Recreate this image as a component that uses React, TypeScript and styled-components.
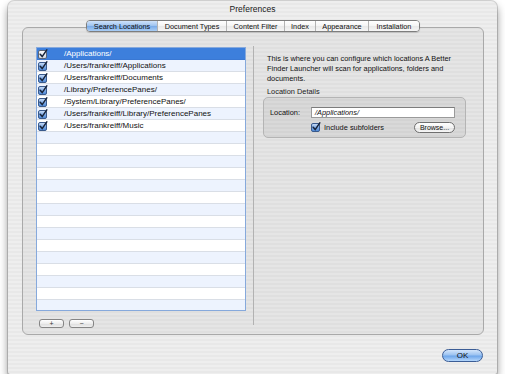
import React, { useId } from 'react';
import styled, { createGlobalStyle, css } from 'styled-components';

const GlobalStyle = createGlobalStyle`
  html, body {
    margin: 0;
    padding: 0;
    background: #ffffff;
  }
  body {
    font-family: "Liberation Sans", Arial, sans-serif;
    color: #111;
  }
`;

const pinstripe = css`
  background-color: #ececec;
  background-image: repeating-linear-gradient(
    180deg,
    #eeeeee 0px,
    #eeeeee 2px,
    #e8e8e8 2px,
    #e8e8e8 4px
  );
`;

const Window = styled.div`
  ${pinstripe}
  width: 489px;
  height: 373px;
  margin: 1px 0 0 8px;
  border-radius: 6px 6px 2px 2px;
  box-shadow: 0 5px 9px rgba(0, 0, 0, 0.45), 0 0 0 1px rgba(0, 0, 0, 0.15);
  display: flex;
  flex-direction: column;
`;

const TitleBar = styled.div`
  height: 15px;
  padding-bottom: 4px;
  display: flex;
  align-items: center;
  justify-content: center;
  font-size: 8.5px;
  color: #1a1a1a;
`;

const TabArea = styled.div`
  display: flex;
  flex-direction: column;
  align-items: center;
  padding: 0 13px 0 14px;
`;

const TabStrip = styled.div`
  position: relative;
  z-index: 1;
  display: flex;
  height: 12px;
  margin-bottom: -5px;
  border: 1px solid #7d7d7d;
  border-radius: 4px;
  overflow: hidden;
  box-sizing: border-box;
  box-shadow: 0 1px 1px rgba(0, 0, 0, 0.15);
`;

const Tab = styled.div<{ $width: number; $active?: boolean }>`
  width: ${({ $width }) => $width}px;
  display: flex;
  align-items: center;
  justify-content: center;
  font-size: 7.3px;
  color: #111;
  box-sizing: border-box;
  border-left: 1px solid #b3b3b3;
  &:first-child {
    border-left: none;
  }
  background: ${({ $active }) =>
    $active
      ? 'linear-gradient(180deg, #cfe2fa 0%, #9cc2ef 50%, #78aae8 51%, #a9cdf5 100%)'
      : 'linear-gradient(180deg, #ffffff 0%, #f4f4f4 50%, #e8e8e8 51%, #f6f6f6 100%)'};
`;

const TabBox = styled.div`
  align-self: stretch;
  height: 308px;
  box-sizing: border-box;
  border: 1px solid #a9a9a9;
  border-radius: 6px;
  background: rgba(0, 0, 0, 0.035);
  padding: 19px 0 0 13px;
  display: flex;
`;

const LeftColumn = styled.div`
  width: 210px;
  display: flex;
  flex-direction: column;
`;

const List = styled.div`
  height: 264px;
  box-sizing: border-box;
  border: 1px solid #86a9dc;
  background: #ffffff;
  overflow: hidden;
`;

const Row = styled.div<{ $selected?: boolean; $alt?: boolean }>`
  height: 12px;
  box-sizing: border-box;
  display: flex;
  align-items: center;
  padding-left: 1px;
  border-bottom: 1px solid ${({ $selected }) => ($selected ? '#3a78d3' : '#d9dee6')};
  background: ${({ $selected, $alt }) => ($selected ? '#3d7fdc' : $alt ? '#edf3fe' : '#ffffff')};
  color: ${({ $selected }) => ($selected ? '#ffffff' : '#111')};
  font-size: 8px;
  white-space: nowrap;
`;

const RowLabel = styled.span`
  margin-left: 16px;
`;

const ButtonRow = styled.div`
  display: flex;
  gap: 5px;
  margin-top: 8px;
  padding-left: 3px;
`;

const SmallButton = styled.div`
  width: 25px;
  height: 9px;
  box-sizing: border-box;
  border: 1px solid #858585;
  border-radius: 3px;
  background: linear-gradient(180deg, #ffffff 0%, #ededed 50%, #dcdcdc 51%, #f0f0f0 100%);
  display: flex;
  align-items: center;
  justify-content: center;
  font-size: 7px;
  line-height: 7px;
  color: #333;
`;

const Divider = styled.div`
  width: 1px;
  height: 279px;
  margin: -1px 0 0 7px;
  background: #b2b2b2;
`;

const RightPanel = styled.div`
  padding-left: 13px;
  width: 200px;
  display: flex;
  flex-direction: column;
`;

const Description = styled.p`
  margin: 7px 0 0;
  font-size: 7.4px;
  line-height: 10px;
  color: #111;
`;

const GroupLabel = styled.div`
  margin-top: 3px;
  font-size: 7.4px;
  line-height: 10px;
  color: #222;
`;

const GroupBox = styled.div`
  margin-left: -4px;
  width: 203px;
  height: 41px;
  box-sizing: border-box;
  border: 1px solid #b4b4b4;
  border-radius: 5px;
  background: rgba(0, 0, 0, 0.05);
  padding: 9px 0 0 6px;
  display: flex;
  flex-direction: column;
  gap: 3px;
`;

const FieldRow = styled.div`
  display: flex;
  align-items: center;
  height: 11px;
`;

const FieldLabel = styled.div`
  width: 41px;
  font-size: 7.4px;
  color: #111;
`;

const TextInput = styled.div`
  width: 144px;
  height: 11px;
  box-sizing: border-box;
  border: 1px solid #9a9a9a;
  border-top-color: #7c7c7c;
  background: #ffffff;
  font-size: 7.4px;
  font-style: italic;
  line-height: 9px;
  padding-left: 3px;
`;

const CheckRow = styled.div`
  display: flex;
  align-items: center;
  height: 12px;
  padding-left: 41px;
  width: 144px;
`;

const CheckLabel = styled.span`
  margin-left: 3px;
  font-size: 7.4px;
  flex: 1;
`;

const PillButton = styled.div`
  width: 41px;
  height: 11px;
  box-sizing: border-box;
  border: 1px solid #6f6f6f;
  border-radius: 6px;
  background: linear-gradient(180deg, #ffffff 0%, #f2f2f2 50%, #e0e0e0 51%, #f8f8f8 100%);
  display: flex;
  align-items: center;
  justify-content: center;
  font-size: 7px;
  color: #111;
`;

const Footer = styled.div`
  display: flex;
  justify-content: flex-end;
  padding-right: 14px;
  margin-top: 14px;
`;

const DefaultButton = styled.div`
  width: 41px;
  height: 13px;
  box-sizing: border-box;
  border: 1px solid #3b5d96;
  border-radius: 7px;
  background: linear-gradient(180deg, #d3e5fb 0%, #9cc3f1 45%, #6ea6ea 55%, #b4d6fb 100%);
  display: flex;
  align-items: center;
  justify-content: center;
  font-size: 8px;
  color: #111;
`;

const CheckBox = ({ light }: { light?: boolean }) => {
  const id = useId();
  return (
    <svg width="10" height="10" viewBox="0 0 10 10">
      <defs>
        <linearGradient id={id} x1="0" y1="0" x2="0" y2="1">
          {light ? (
            <>
              <stop offset="0" stopColor="#ffffff" />
              <stop offset="1" stopColor="#cfd6e0" />
            </>
          ) : (
            <>
              <stop offset="0" stopColor="#cfe0f7" />
              <stop offset="0.5" stopColor="#7fabe6" />
              <stop offset="1" stopColor="#4a86d6" />
            </>
          )}
        </linearGradient>
      </defs>
      <rect x="0.5" y="1.5" width="8" height="8" rx="1.5" fill={`url(#${id})`} stroke={light ? '#5a6475' : '#3a5a8c'} />
      <path d="M2.2 5.2 L4.2 7.6 L8.8 0.8" fill="none" stroke="#18243a" strokeWidth="1.5" strokeLinecap="round" />
    </svg>
  );
};

const paths = [
  '/Applications/',
  '/Users/frankreiff/Applications',
  '/Users/frankreiff/Documents',
  '/Library/PreferencePanes/',
  '/System/Library/PreferencePanes/',
  '/Users/frankreiff/Library/PreferencePanes',
  '/Users/frankreiff/Music',
];

const tabs = [
  { label: 'Search Locations', width: 70 },
  { label: 'Document Types', width: 69 },
  { label: 'Content Filter', width: 58 },
  { label: 'Index', width: 31 },
  { label: 'Appearance', width: 53 },
  { label: 'Installation', width: 51 },
];

const App = () => {
  const rows = Array.from({ length: 22 }, (_, i) => paths[i] ?? null);

  return (
    <>
      <GlobalStyle />
      <Window>
        <TitleBar>Preferences</TitleBar>
        <TabArea>
          <TabStrip>
            {tabs.map((t, i) => (
              <Tab key={t.label} $width={t.width} $active={i === 0}>
                {t.label}
              </Tab>
            ))}
          </TabStrip>
          <TabBox>
            <LeftColumn>
              <List>
                {rows.map((p, i) => (
                  <Row key={i} $selected={i === 0} $alt={i % 2 === 1}>
                    {p !== null && (
                      <>
                        <CheckBox light={i === 0} />
                        <RowLabel>{p}</RowLabel>
                      </>
                    )}
                  </Row>
                ))}
              </List>
              <ButtonRow>
                <SmallButton>+</SmallButton>
                <SmallButton>−</SmallButton>
              </ButtonRow>
            </LeftColumn>
            <Divider />
            <RightPanel>
              <Description>
                This is where you can configure which locations A Better
                <br />
                Finder Launcher will scan for applications, folders and
                <br />
                documents.
              </Description>
              <GroupLabel>Location Details</GroupLabel>
              <GroupBox>
                <FieldRow>
                  <FieldLabel>Location:</FieldLabel>
                  <TextInput>/Applications/</TextInput>
                </FieldRow>
                <CheckRow>
                  <CheckBox />
                  <CheckLabel>Include subfolders</CheckLabel>
                  <PillButton>Browse...</PillButton>
                </CheckRow>
              </GroupBox>
            </RightPanel>
          </TabBox>
        </TabArea>
        <Footer>
          <DefaultButton>OK</DefaultButton>
        </Footer>
      </Window>
    </>
  );
};

export default App;
